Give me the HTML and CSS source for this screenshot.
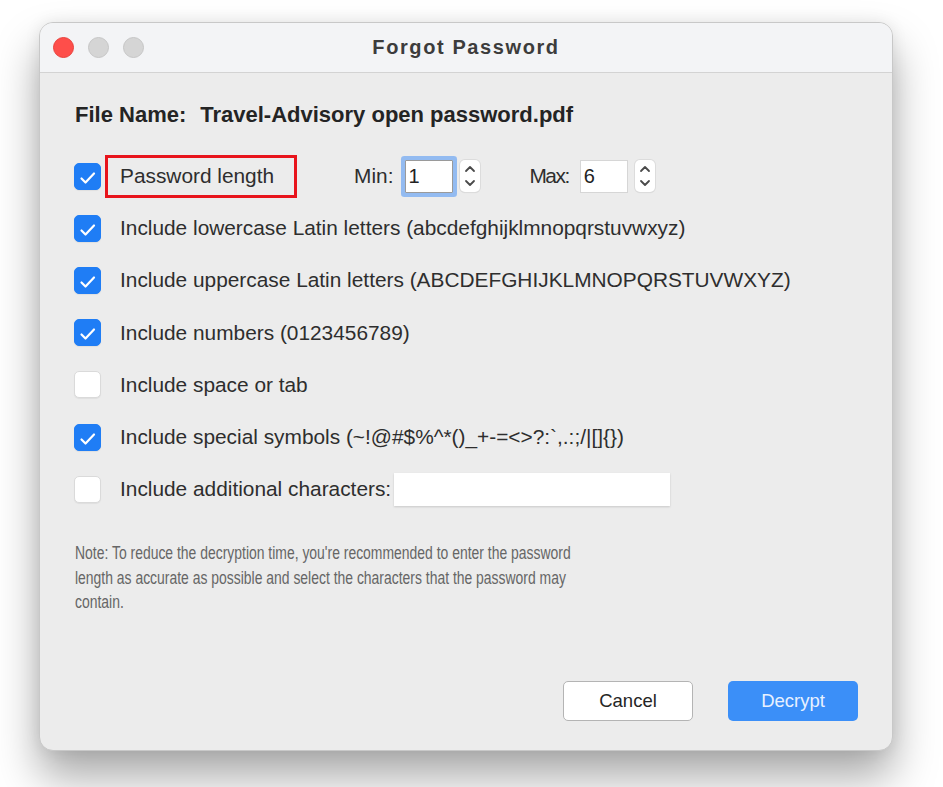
FILE: index.html
```html
<!DOCTYPE html>
<html lang="en">
<head>
    <meta charset="UTF-8">
    <meta name="viewport" content="width=device-width, initial-scale=1.0">
    <title>Forgot Password</title>
    <link rel="stylesheet" href="styles.css">
</head>
<body>
    <div class="window">
        <header class="titlebar">
            <div class="lights">
                <span class="light red"></span>
                <span class="light"></span>
                <span class="light"></span>
            </div>
            <h1>Forgot Password</h1>
            <div></div>
        </header>

        <main class="content">
            <p class="file-name"><span>File Name:</span><span class="file">Travel-Advisory open password.pdf</span></p>

            <ul class="options">
                <li class="option">
                    <span class="box checked"><svg viewBox="0 0 27 27"><path d="M7.5 15.5 L11.5 19.5 L20 10.5"/></svg></span>
                    <span class="highlight">Password length</span>
                    <span class="spin-label min-label">Min:</span>
                    <span class="field focused">1</span>
                    <span class="stepper"><svg viewBox="0 0 20 32"><path d="M6 11 L10 7 L14 11"/><path d="M6 21 L10 25 L14 21"/></svg></span>
                    <span class="spin-label max-label">Max:</span>
                    <span class="field">6</span>
                    <span class="stepper"><svg viewBox="0 0 20 32"><path d="M6 11 L10 7 L14 11"/><path d="M6 21 L10 25 L14 21"/></svg></span>
                </li>
                <li class="option">
                    <span class="box checked"><svg viewBox="0 0 27 27"><path d="M7.5 15.5 L11.5 19.5 L20 10.5"/></svg></span>
                    <span>Include lowercase Latin letters (abcdefghijklmnopqrstuvwxyz)</span>
                </li>
                <li class="option">
                    <span class="box checked"><svg viewBox="0 0 27 27"><path d="M7.5 15.5 L11.5 19.5 L20 10.5"/></svg></span>
                    <span>Include uppercase Latin letters (ABCDEFGHIJKLMNOPQRSTUVWXYZ)</span>
                </li>
                <li class="option">
                    <span class="box checked"><svg viewBox="0 0 27 27"><path d="M7.5 15.5 L11.5 19.5 L20 10.5"/></svg></span>
                    <span>Include numbers (0123456789)</span>
                </li>
                <li class="option">
                    <span class="box"></span>
                    <span>Include space or tab</span>
                </li>
                <li class="option">
                    <span class="box checked"><svg viewBox="0 0 27 27"><path d="M7.5 15.5 L11.5 19.5 L20 10.5"/></svg></span>
                    <span>Include special symbols (~!@#$%^*()_+-=&lt;&gt;?:`,.:;/|[]{})</span>
                </li>
                <li class="option">
                    <span class="box"></span>
                    <span>Include additional characters:</span>
                    <span class="extra"></span>
                </li>
            </ul>

            <p class="note">Note: To reduce the decryption time, you're recommended to enter the password length as accurate as possible and select the characters that the password may contain.</p>
        </main>

        <footer class="actions">
            <button class="btn cancel">Cancel</button>
            <button class="btn decrypt">Decrypt</button>
        </footer>
    </div>
</body>
</html>
```

FILE: styles.css
```css
body {
    margin: 0;
    min-height: 100vh;
    box-sizing: border-box;
    padding: 22px 0 0 39px;
    background-color: #ffffff;
    font-family: "Liberation Sans", Arial, sans-serif;
    color: #2b2b2b;
}

.window {
    width: 854px;
    height: 729px;
    box-sizing: border-box;
    border: 1px solid #c8c8c8;
    border-radius: 14px;
    background-color: #ececec;
    box-shadow: 0 26px 44px rgba(0, 0, 0, 0.34), 0 0 16px rgba(0, 0, 0, 0.08);
    display: flex;
    flex-direction: column;
    overflow: hidden;
}

.titlebar {
    height: 49px;
    flex-shrink: 0;
    background-color: #f3f4f6;
    border-bottom: 1px solid #d3d3d3;
    display: grid;
    grid-template-columns: 1fr auto 1fr;
    align-items: center;
}

.lights {
    display: flex;
    gap: 14px;
    padding-left: 13px;
}

.light {
    width: 19px;
    height: 19px;
    border-radius: 50%;
    background-color: #d5d5d5;
    border: 1px solid #c6c6c6;
}

.light.red {
    background-color: #fe4e4a;
    border-color: #e9413c;
}

.titlebar h1 {
    margin: 0;
    font-size: 20px;
    letter-spacing: 1.6px;
    font-weight: bold;
    color: #3c3c3c;
}

.content {
    padding: 0 34px;
}

.file-name {
    margin: 29px 0 0 1px;
    font-size: 22px;
    line-height: 26px;
    font-weight: bold;
    color: #242424;
}

.file-name .file {
    margin-left: 14px;
}

.options {
    list-style: none;
    margin: 22px 0 0 0;
    padding: 0;
}

.option {
    height: 52.2px;
    display: flex;
    align-items: center;
    font-size: 20.85px;
    color: #2e2e2e;
}

.box {
    width: 27px;
    height: 27px;
    box-sizing: border-box;
    border-radius: 5px;
    background-color: #ffffff;
    border: 1px solid #dadada;
    box-shadow: 0 1px 1px rgba(0, 0, 0, 0.06);
    margin-right: 19px;
    flex-shrink: 0;
}

.box.checked {
    background-color: #1f7df5;
    border-color: #1f7df5;
}

.box svg {
    display: block;
    width: 27px;
    height: 27px;
    margin: -1px;
}

.box path {
    fill: none;
    stroke: #ffffff;
    stroke-width: 2.2;
    stroke-linecap: round;
    stroke-linejoin: round;
}

.highlight {
    margin-left: -15px;
    height: 43px;
    box-sizing: border-box;
    border: 3px solid #e8141c;
    padding: 0 20px 0 12px;
    display: flex;
    align-items: center;
}

.spin-label {
    margin-right: 11px;
}

.min-label {
    margin-left: 57px;
}

.max-label {
    margin-left: 50px;
    margin-right: 11px;
    letter-spacing: -1.5px;
}

.field {
    width: 48px;
    height: 33px;
    box-sizing: border-box;
    background-color: #ffffff;
    border: 1px solid #d6d6d6;
    padding-left: 3px;
    display: flex;
    align-items: center;
    font-size: 20px;
    color: #222222;
}

.field.focused {
    border-color: #9a9a9a;
    box-shadow: 0 0 0 4px #93bbf1;
    border-radius: 1px;
}

.stepper {
    width: 20px;
    height: 32px;
    margin-left: 7px;
    background-color: #ffffff;
    border-radius: 5px;
    box-shadow: 0 0 0 1px #dcdcdc, 0 1px 1px rgba(0, 0, 0, 0.1);
}

.stepper svg {
    display: block;
    width: 20px;
    height: 32px;
}

.stepper path {
    fill: none;
    stroke: #4a4a4a;
    stroke-width: 1.8;
    stroke-linecap: round;
    stroke-linejoin: round;
}

.extra {
    width: 276px;
    height: 33px;
    margin-left: 3px;
    background-color: #ffffff;
    box-shadow: 0 1px 2px rgba(0, 0, 0, 0.15);
}

/* no narrow face installed, so the condensed look is squeezed in */
.note {
    margin: 26px 0 0 1px;
    width: 652px;
    font-size: 18.3px;
    line-height: 24.5px;
    color: #666666;
    transform: scaleX(0.762);
    transform-origin: left top;
}

.actions {
    margin-top: auto;
    display: flex;
    justify-content: flex-end;
    gap: 35px;
    padding: 0 34px 29px 0;
}

.btn {
    width: 130px;
    height: 40px;
    border-radius: 5px;
    font-family: "Liberation Sans", Arial, sans-serif;
    font-size: 18.5px;
    cursor: pointer;
}

.cancel {
    background-color: #ffffff;
    border: 1px solid #b4b4b4;
    color: #252525;
}

.decrypt {
    background-color: #3b8ff8;
    border: none;
    color: #e8f1ff;
}
```
